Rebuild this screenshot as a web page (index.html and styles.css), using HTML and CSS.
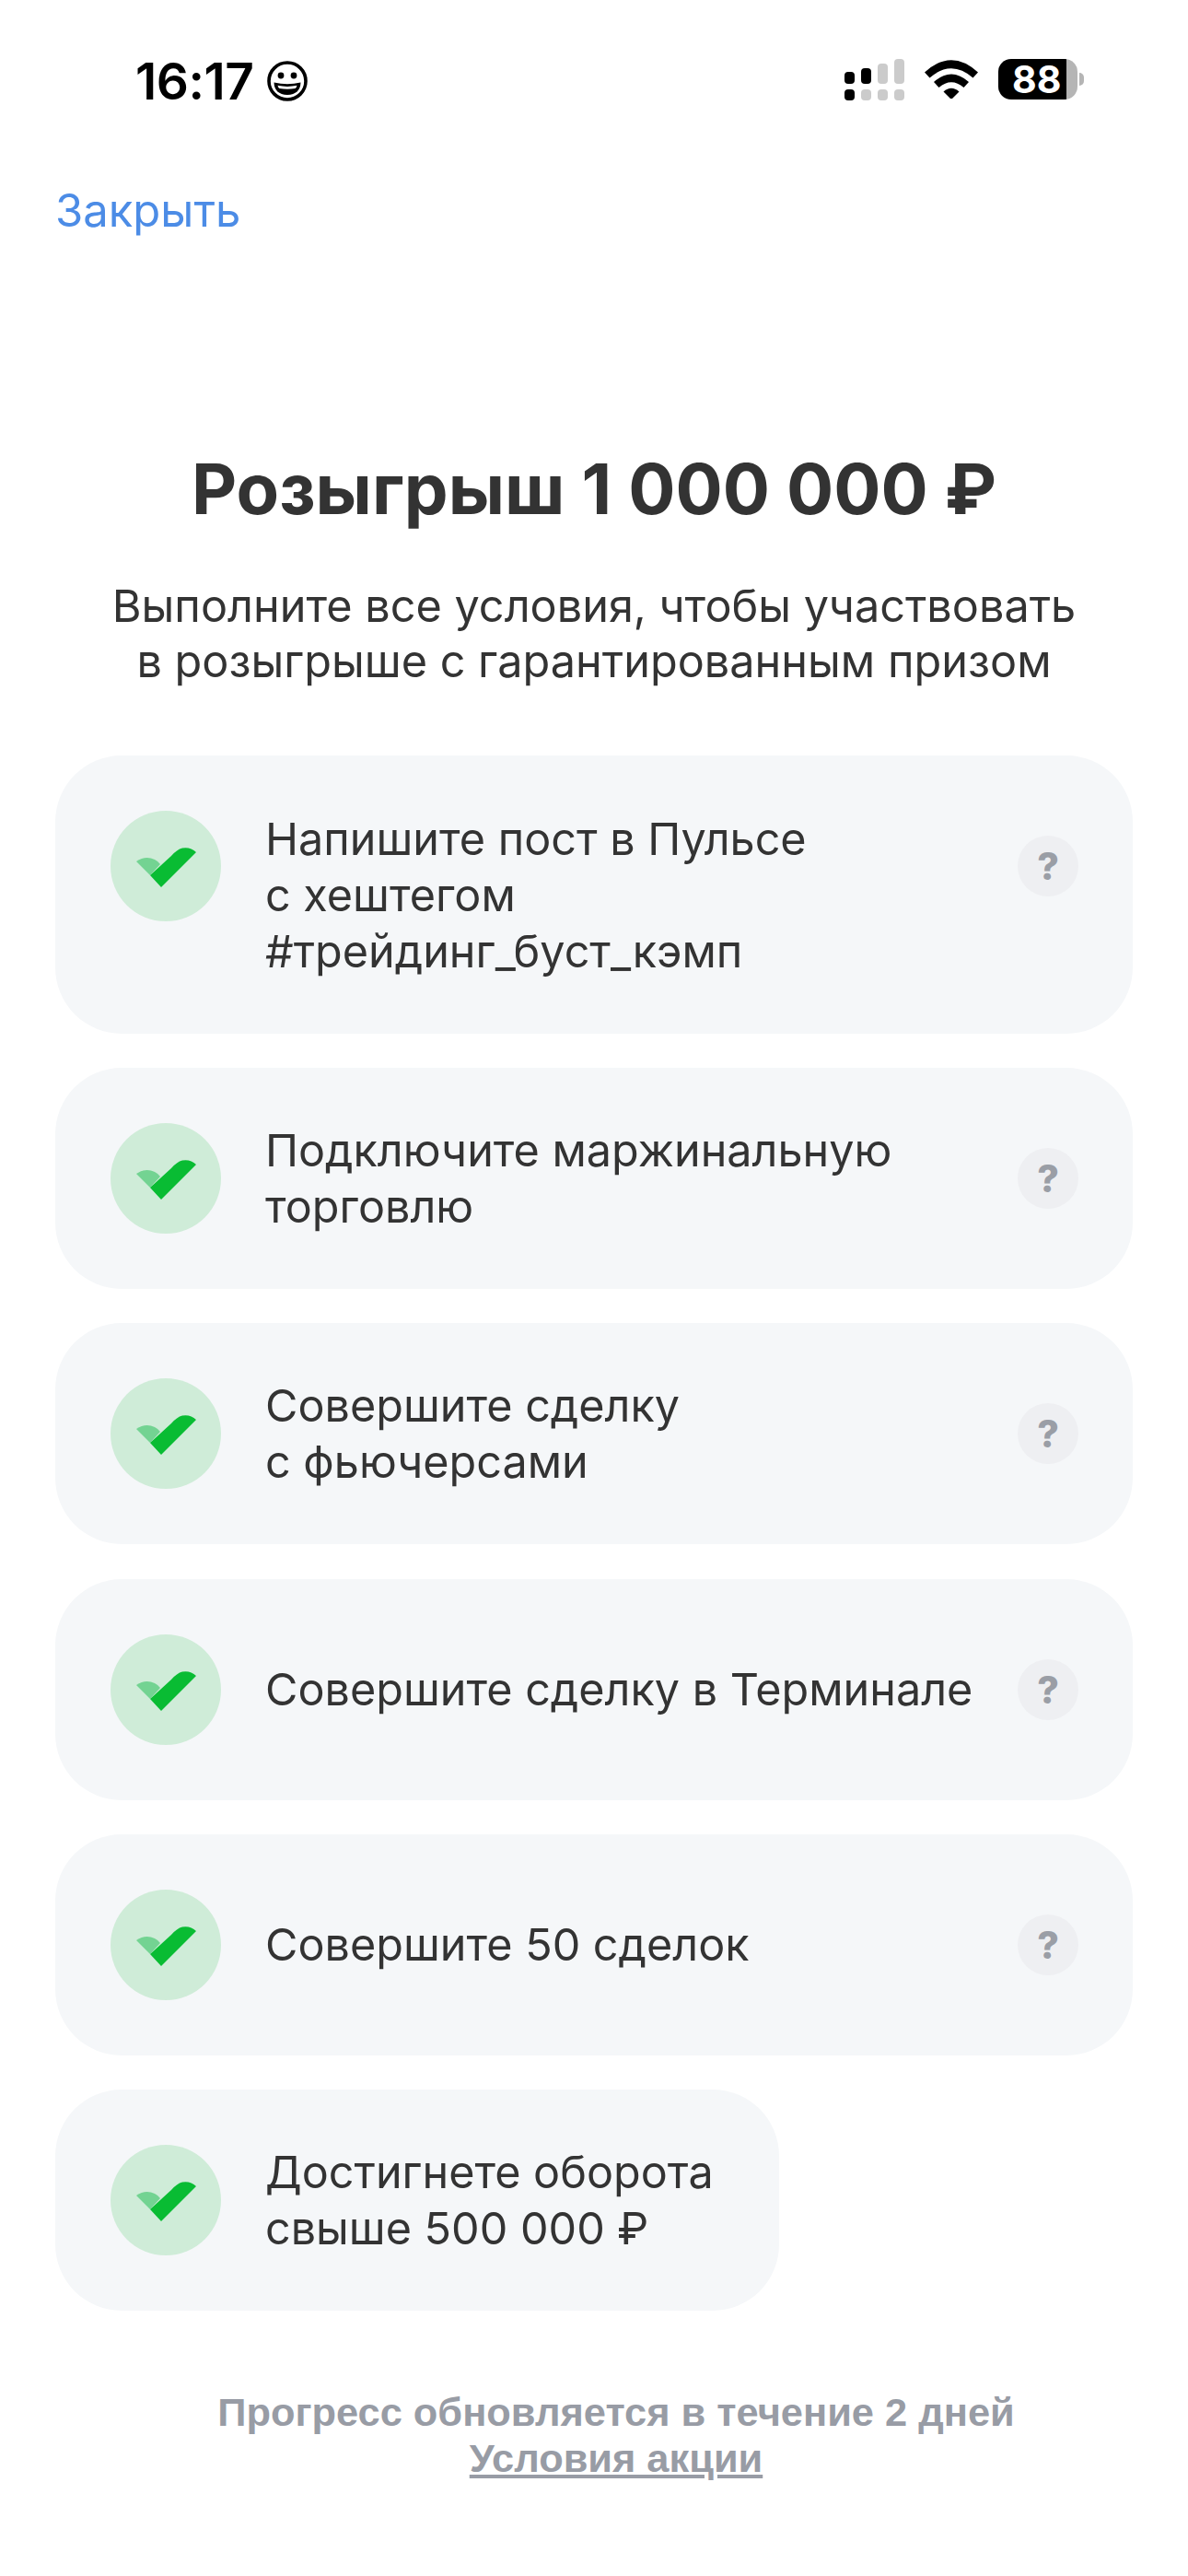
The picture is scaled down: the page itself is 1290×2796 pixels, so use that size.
FILE: index.html
```html
<!DOCTYPE html>
<html lang="ru">
<head>
<meta charset="utf-8">
<title>Розыгрыш</title>
<link rel="stylesheet" href="styles.css">
</head>
<body>
<div class="status">
  <div class="status-left">
    <span class="time">16:17</span>
    <svg class="emoji" viewBox="0 0 44 44" width="44" height="44"><circle cx="22" cy="22" r="20" fill="none" stroke="#000" stroke-width="3.6"/><circle cx="15" cy="16" r="3.4"/><circle cx="29" cy="16" r="3.4"/><path d="M7.5 23.5 Q22 27 36.5 23.5 Q36 36.5 22 37 Q8 36.5 7.500 23.5Z"/><path d="M11.5 26.8 Q22 29 32.5 26.8 Q32 29.5 30.5 30 Q22 31.5 13.5 30 Q12 29.5 11.5 26.8Z" fill="#fff"/></svg>
  </div>
  <div class="status-right">
    <svg class="signal" viewBox="0 0 65 45" width="65" height="45"><g fill="#000"><rect x="0" y="14" width="11" height="13" rx="4"/><rect x="0" y="33" width="11" height="12" rx="4"/><rect x="18" y="10" width="11" height="17" rx="4"/></g><g fill="#cbcbcb"><rect x="18" y="33" width="11" height="12" rx="4"/><rect x="36" y="5" width="11" height="22" rx="4"/><rect x="36" y="33" width="11" height="12" rx="4"/><rect x="54" y="0" width="11" height="27" rx="4"/><rect x="54" y="33" width="11" height="12" rx="4"/></g></svg>
    <svg class="wifi" viewBox="0 0 58 42" width="58" height="42"><path d="M0 13.500 Q29 -13 58 13.500 L52.500 19.500 Q29 -1 5.500 19.500Z"/><path d="M10 24 Q29 7 48 24 L42.500 30 Q29 18.500 15.500 30Z"/><path d="M20.500 34.500 Q29 27 37.500 34.500 L29 43Z"/></svg>
    <div class="battery"><div class="battery-body"><span class="battery-num">88</span></div><div class="battery-cap"></div></div>
  </div>
</div>

<a class="close">Закрыть</a>

<h1 class="title">Розыгрыш 1 000 000 ₽</h1>
<p class="subtitle">Выполните все условия, чтобы участвовать<br>в розыгрыше с гарантированным призом</p>

<div class="list">
  <div class="card card-tall">
    <svg class="check" viewBox="0 0 120 120" width="120" height="120"><circle cx="60" cy="60" r="60" fill="#cfecd8"/><path d="M28 55 Q38 48 48 53 Q52 55 54 58 L43 70Z" fill="#73d392"/><path d="M43 70 L66 49 Q72 42 78 40.500 Q87 39 93 45 L55 83Z" fill="#09bc33"/></svg>
    <div class="card-text">Напишите пост в Пульсе<br>с хештегом<br>#трейдинг_буст_кэмп</div>
    <span class="help">?</span>
  </div>
  <div class="card">
    <svg class="check" viewBox="0 0 120 120" width="120" height="120"><circle cx="60" cy="60" r="60" fill="#cfecd8"/><path d="M28 55 Q38 48 48 53 Q52 55 54 58 L43 70Z" fill="#73d392"/><path d="M43 70 L66 49 Q72 42 78 40.500 Q87 39 93 45 L55 83Z" fill="#09bc33"/></svg>
    <div class="card-text">Подключите маржинальную<br>торговлю</div>
    <span class="help">?</span>
  </div>
  <div class="card">
    <svg class="check" viewBox="0 0 120 120" width="120" height="120"><circle cx="60" cy="60" r="60" fill="#cfecd8"/><path d="M28 55 Q38 48 48 53 Q52 55 54 58 L43 70Z" fill="#73d392"/><path d="M43 70 L66 49 Q72 42 78 40.500 Q87 39 93 45 L55 83Z" fill="#09bc33"/></svg>
    <div class="card-text">Совершите сделку<br>с фьючерсами</div>
    <span class="help">?</span>
  </div>
  <div class="card">
    <svg class="check" viewBox="0 0 120 120" width="120" height="120"><circle cx="60" cy="60" r="60" fill="#cfecd8"/><path d="M28 55 Q38 48 48 53 Q52 55 54 58 L43 70Z" fill="#73d392"/><path d="M43 70 L66 49 Q72 42 78 40.500 Q87 39 93 45 L55 83Z" fill="#09bc33"/></svg>
    <div class="card-text">Совершите сделку в Терминале</div>
    <span class="help">?</span>
  </div>
  <div class="card">
    <svg class="check" viewBox="0 0 120 120" width="120" height="120"><circle cx="60" cy="60" r="60" fill="#cfecd8"/><path d="M28 55 Q38 48 48 53 Q52 55 54 58 L43 70Z" fill="#73d392"/><path d="M43 70 L66 49 Q72 42 78 40.500 Q87 39 93 45 L55 83Z" fill="#09bc33"/></svg>
    <div class="card-text">Совершите 50 сделок</div>
    <span class="help">?</span>
  </div>
  <div class="card card-short">
    <svg class="check" viewBox="0 0 120 120" width="120" height="120"><circle cx="60" cy="60" r="60" fill="#cfecd8"/><path d="M28 55 Q38 48 48 53 Q52 55 54 58 L43 70Z" fill="#73d392"/><path d="M43 70 L66 49 Q72 42 78 40.500 Q87 39 93 45 L55 83Z" fill="#09bc33"/></svg>
    <div class="card-text">Достигнете оборота<br>свыше 500 000 ₽</div>
  </div>
</div>

<div class="footer">
  <div>Прогресс обновляется в течение 2 дней</div>
  <a class="terms">Условия акции</a>
</div>
</body>
</html>
```
FILE: styles.css
```css
* { box-sizing: border-box; }
html, body { margin: 0; padding: 0; }
body { width: 1290px; height: 2796px; background: #fff; font-family: Inter, "Liberation Sans", sans-serif; color: #333; overflow: hidden; }

.status { height: 199px; padding: 62px 113px 0 147px; display: flex; justify-content: space-between; align-items: flex-start; }
.status-left { display: flex; align-items: center; gap: 15px; }
.time { font-size: 55px; line-height: 52px; font-weight: 600; color: #000; letter-spacing: -0.5px; }
.emoji { display: block; }
.status-right { display: flex; align-items: flex-start; }
.signal { display: block; margin-top: 2px; margin-right: 22px; }
.wifi { display: block; margin-top: 3px; margin-right: 22px; }
.battery { display: flex; align-items: center; margin-top: 2px; }
.battery-body { width: 86px; height: 44px; background: linear-gradient(90deg, #000 0, #000 86%, #b5b5b5 86%); border-radius: 14px; display: flex; align-items: center; padding-left: 15px; }
.battery-num { font-size: 41px; font-weight: 700; color: #fff; line-height: 44px; }
.battery-cap { width: 5px; height: 14px; background: #b5b5b5; border-radius: 0 6px 6px 0; margin-left: 2px; }

.close { display: block; margin-left: 60px; font-size: 49px; line-height: 60px; color: #4c8ce6; }

.title { margin: 226px 0 0; text-align: center; font-size: 76px; line-height: 90px; font-weight: 700; color: #333; }
.subtitle { margin: 53px 0 0; text-align: center; font-size: 48.6px; line-height: 60px; color: #333; }

.list { margin: 72px 60px 0; display: flex; flex-direction: column; gap: 37.2px; align-items: flex-start; }
.card { width: 1170px; height: 240px; border-radius: 72px; background: #f5f7f9; padding: 0 60px; display: flex; align-items: center; }
.card-tall { height: 302px; }
.card-tall .check, .card-tall .help { align-self: flex-start; }
.card-tall .check { margin-top: 60px; }
.card-tall .help { margin-top: 87px; }
.card-short { width: 786px; }
.check { display: block; flex: none; margin-right: 48px; }
.card-text { flex: 1; font-size: 48.5px; line-height: 61px; color: #333; white-space: nowrap; }
.help { flex: none; width: 66px; height: 66px; border-radius: 50%; background: #eeeff2; color: #9a9ea6; font-size: 41px; font-weight: 800; line-height: 66px; text-align: center; margin-right: -1px; }

.footer { margin-top: 85px; padding-left: 48px; text-align: center; font-family: "Liberation Sans", sans-serif; font-size: 43.4px; line-height: 50px; font-weight: 700; color: #989ca5; }
.terms { display: block; text-decoration: underline; }
```
